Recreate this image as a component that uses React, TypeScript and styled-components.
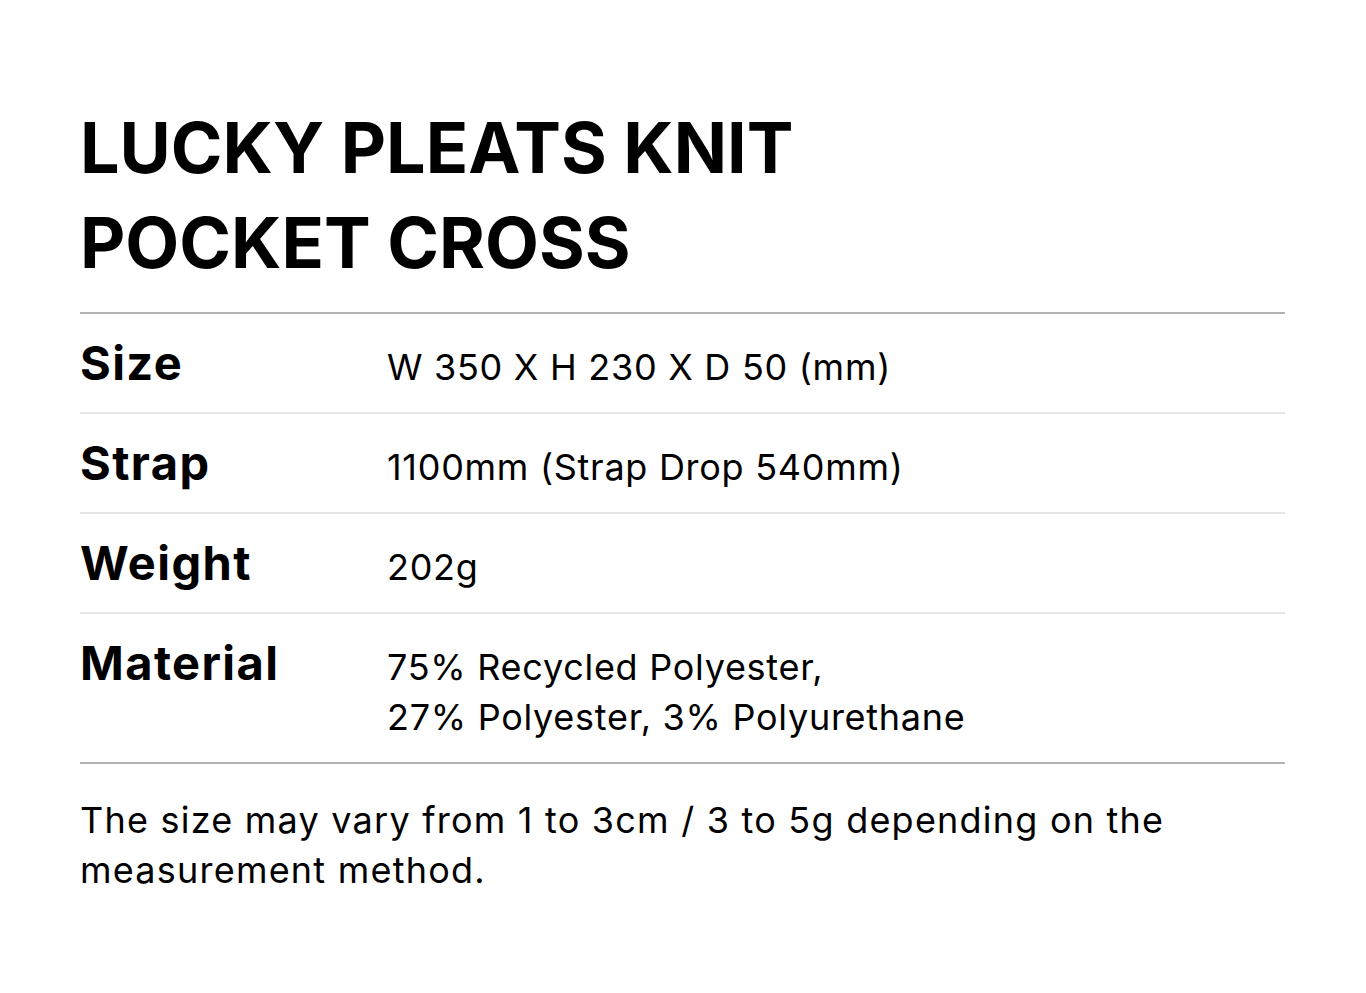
import styled, { createGlobalStyle } from "styled-components";

const GlobalStyle = createGlobalStyle`
  html, body {
    margin: 0;
    padding: 0;
    background: #fff;
  }
  body {
    font-family: Inter, "Liberation Sans", sans-serif;
    color: #000;
  }
`;

const Page = styled.div`
  width: 1366px;
  height: 993px;
  box-sizing: border-box;
  padding: 100px 81px 0 80px;
`;

const Title = styled.h1`
  margin: 0 0 22px;
  font-size: 70px;
  line-height: 95px;
  font-weight: 700;
  letter-spacing: 0;
`;

const Table = styled.div`
  border-top: 2px solid #b3b3b3;
  border-bottom: 2px solid #b3b3b3;
`;

const Row = styled.div`
  display: grid;
  grid-template-columns: 307px 1fr;
  align-items: start;
  padding: 24px 0 20px;
  & + & {
    border-top: 2px solid #e6e6e6;
  }
`;

const Label = styled.div`
  padding-top: 2px;
  font-size: 47px;
  line-height: 46px;
  font-weight: 700;
  letter-spacing: 0.03em;
`;

const Value = styled.div`
  padding-top: 4px;
  font-size: 36px;
  line-height: 50px;
  letter-spacing: 0.02em;
`;

const Note = styled.p`
  margin: 31px 0 0;
  font-size: 36px;
  line-height: 50px;
  letter-spacing: 0.034em;
`;

const specs = [
  { label: "Size", value: ["W 350 X H 230 X D 50 (mm)"] },
  { label: "Strap", value: ["1100mm (Strap Drop 540mm)"] },
  { label: "Weight", value: ["202g"] },
  {
    label: "Material",
    value: ["75% Recycled Polyester,", "27% Polyester, 3% Polyurethane"],
  },
];

export default function App() {
  return (
    <Page>
      <GlobalStyle />
      <Title>
        LUCKY PLEATS KNIT
        <br />
        POCKET CROSS
      </Title>
      <Table>
        {specs.map((s) => (
          <Row key={s.label}>
            <Label>{s.label}</Label>
            <Value>
              {s.value.map((line) => (
                <div key={line}>{line}</div>
              ))}
            </Value>
          </Row>
        ))}
      </Table>
      <Note>
        The size may vary from 1 to 3cm / 3 to 5g depending on the
        <br />
        measurement method.
      </Note>
    </Page>
  );
}
